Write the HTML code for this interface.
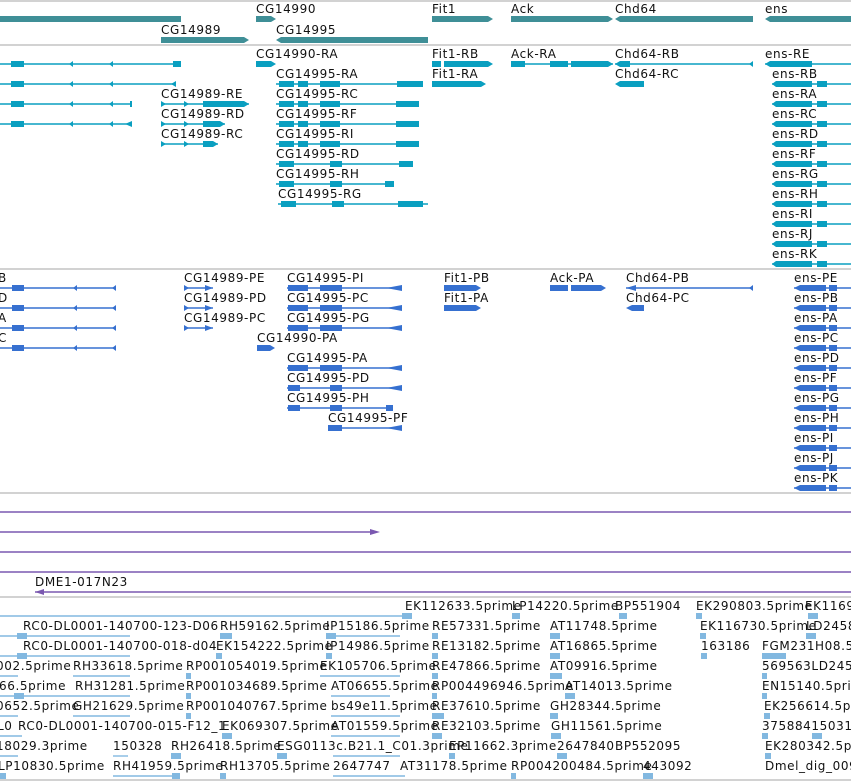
<!DOCTYPE html>
<html><head><meta charset="utf-8"><style>
html,body{margin:0;padding:0;background:#fff;width:851px;height:781px;overflow:hidden}
svg{display:block}
text{font-family:"DejaVu Sans","Liberation Sans",sans-serif;font-size:12px;letter-spacing:0.6px;fill:#111}
.g{fill:#3f8f97}.t{fill:#0a9fc0}.p{fill:#3670d0}.u{fill:#7a58b0}.e{fill:#82b8e0}
.tl{stroke:#0a9fc0;stroke-width:1.4}.pl{stroke:#3670d0;stroke-width:1.4}.ul{stroke:#7a58b0;stroke-width:1.4}.el{stroke:#82b8e0;stroke-width:1.4}
.bd{stroke:#c4c4c4;stroke-width:1.5}
</style></head><body>
<svg width="851" height="781" xmlns="http://www.w3.org/2000/svg">
<line class="bd" x1="0" y1="1" x2="851" y2="1"/>
<line class="bd" x1="0" y1="45" x2="851" y2="45"/>
<line class="bd" x1="0" y1="269" x2="851" y2="269"/>
<line class="bd" x1="0" y1="493" x2="851" y2="493"/>
<line class="bd" x1="0" y1="597" x2="851" y2="597"/>
<line class="bd" x1="0" y1="780" x2="851" y2="780"/>

<rect class="g" x="0" y="16" width="181" height="6"/>
<text x="256" y="13">CG14990</text>
<polygon class="g" points="256,16 271,16 276,19 271,22 256,22"/>
<text x="432" y="13">Fit1</text>
<polygon class="g" points="432,16 488,16 493,19 488,22 432,22"/>
<text x="511" y="13">Ack</text>
<polygon class="g" points="511,16 608,16 613,19 608,22 511,22"/>
<text x="615" y="13">Chd64</text>
<polygon class="g" points="620,16 753,16 753,22 620,22 615,19"/>
<text x="765" y="13">ens</text>
<polygon class="g" points="770,16 851,16 851,22 770,22 765,19"/>
<text x="161" y="34">CG14989</text>
<polygon class="g" points="161,37 244,37 249,40 244,43 161,43"/>
<text x="276" y="34">CG14995</text>
<polygon class="g" points="281,37 428,37 428,43 281,43 276,40"/>

<g>
<line class="tl" x1="0" y1="64" x2="181" y2="64"/><rect class="t" x="11" y="61" width="13" height="6"/><rect class="t" x="173" y="61" width="8" height="6"/><polygon class="t" points="73,61 73,67 69,64"/><polygon class="t" points="113,61 113,67 109,64"/>
<line class="tl" x1="0" y1="84" x2="176" y2="84"/><rect class="t" x="11" y="81" width="13" height="6"/><polygon class="t" points="176,81 176,87 171,84"/><polygon class="t" points="73,81 73,87 69,84"/><polygon class="t" points="113,81 113,87 109,84"/>
<line class="tl" x1="0" y1="104" x2="132" y2="104"/><rect class="t" x="11" y="101" width="13" height="6"/><polygon class="t" points="73,101 73,107 69,104"/><polygon class="t" points="113,101 113,107 109,104"/><rect class="t" x="130" y="101" width="2" height="6"/>
<line class="tl" x1="0" y1="124" x2="132" y2="124"/><rect class="t" x="11" y="121" width="13" height="6"/><polygon class="t" points="73,121 73,127 69,124"/><polygon class="t" points="113,121 113,127 109,124"/><polygon class="t" points="132,121 132,127 125,124"/>

<text x="256" y="58">CG14990-RA</text><polygon class="t" points="256,61 271,61 276,64 271,67 256,67"/>
<text x="432" y="58">Fit1-RB</text><rect class="t" x="432" y="61" width="9" height="6"/><polygon class="t" points="444,61 488,61 493,64 488,67 444,67"/>
<text x="511" y="58">Ack-RA</text><line class="tl" x1="511" y1="64" x2="613" y2="64"/><rect class="t" x="511" y="61" width="14" height="6"/><rect class="t" x="550" y="61" width="18" height="6"/><polygon class="t" points="571,61 608,61 613,64 608,67 571,67"/>
<text x="615" y="58">Chd64-RB</text><line class="tl" x1="615" y1="64" x2="753" y2="64"/><polygon class="t" points="620,61 630,61 630,67 620,67 615,64"/><polygon class="t" points="753,61 753,67 749,64"/>
<text x="765" y="58">ens-RE</text><line class="tl" x1="765" y1="64" x2="851" y2="64"/><polygon class="t" points="770,61 812,61 812,67 770,67 765,64"/>

<text x="276" y="78">CG14995-RA</text><line class="tl" x1="276" y1="84" x2="423" y2="84"/><rect class="t" x="279" y="81" width="15" height="6"/><rect class="t" x="298" y="81" width="10" height="6"/><rect class="t" x="320" y="81" width="20" height="6"/><rect class="t" x="397" y="81" width="26" height="6"/>
<text x="432" y="78">Fit1-RA</text><polygon class="t" points="432,81 481,81 486,84 481,87 432,87"/>
<text x="615" y="78">Chd64-RC</text><polygon class="t" points="620,81 644,81 644,87 620,87 615,84"/>

<text x="161" y="98">CG14989-RE</text><line class="tl" x1="161" y1="104" x2="249" y2="104"/><polygon class="t" points="161,101 166,104 161,107"/><polygon class="t" points="184,101 189,104 184,107"/><polygon class="t" points="203,101 244,101 249,104 244,107 203,107"/>
<text x="276" y="98">CG14995-RC</text><line class="tl" x1="276" y1="104" x2="419" y2="104"/><rect class="t" x="279" y="101" width="15" height="6"/><rect class="t" x="298" y="101" width="10" height="6"/><rect class="t" x="320" y="101" width="20" height="6"/><rect class="t" x="396" y="101" width="23" height="6"/>

<text x="161" y="118">CG14989-RD</text><line class="tl" x1="161" y1="124" x2="225" y2="124"/><polygon class="t" points="161,121 166,124 161,127"/><polygon class="t" points="184,121 189,124 184,127"/><polygon class="t" points="203,121 220,121 225,124 220,127 203,127"/>
<text x="276" y="118">CG14995-RF</text><line class="tl" x1="276" y1="124" x2="419" y2="124"/><rect class="t" x="279" y="121" width="15" height="6"/><rect class="t" x="298" y="121" width="10" height="6"/><rect class="t" x="320" y="121" width="20" height="6"/><rect class="t" x="396" y="121" width="23" height="6"/>

<text x="161" y="138">CG14989-RC</text><line class="tl" x1="161" y1="144" x2="218" y2="144"/><polygon class="t" points="161,141 166,144 161,147"/><polygon class="t" points="184,141 189,144 184,147"/><polygon class="t" points="203,141 213,141 218,144 213,147 203,147"/>
<text x="276" y="138">CG14995-RI</text><line class="tl" x1="276" y1="144" x2="419" y2="144"/><rect class="t" x="279" y="141" width="15" height="6"/><rect class="t" x="298" y="141" width="10" height="6"/><rect class="t" x="320" y="141" width="20" height="6"/><rect class="t" x="396" y="141" width="23" height="6"/>

<text x="276" y="158">CG14995-RD</text><line class="tl" x1="276" y1="164" x2="413" y2="164"/><rect class="t" x="279" y="161" width="15" height="6"/><rect class="t" x="330" y="161" width="12" height="6"/><rect class="t" x="399" y="161" width="14" height="6"/>
<text x="276" y="178">CG14995-RH</text><line class="tl" x1="276" y1="184" x2="394" y2="184"/><rect class="t" x="279" y="181" width="15" height="6"/><rect class="t" x="330" y="181" width="12" height="6"/><rect class="t" x="385" y="181" width="9" height="6"/>
<text x="278" y="198">CG14995-RG</text><line class="tl" x1="278" y1="204" x2="428" y2="204"/><rect class="t" x="281" y="201" width="15" height="6"/><rect class="t" x="332" y="201" width="12" height="6"/><rect class="t" x="398" y="201" width="25" height="6"/>

<g>
<text x="772" y="78">ens-RB</text>
<text x="772" y="98">ens-RA</text>
<text x="772" y="118">ens-RC</text>
<text x="772" y="138">ens-RD</text>
<text x="772" y="158">ens-RF</text>
<text x="772" y="178">ens-RG</text>
<text x="772" y="198">ens-RH</text>
<text x="772" y="218">ens-RI</text>
<text x="772" y="238">ens-RJ</text>
<text x="772" y="258">ens-RK</text>
</g>
<g>
<line class="tl" x1="772" y1="84" x2="851" y2="84"/><polygon class="t" points="776,81 812,81 812,87 776,87 772,84"/><rect class="t" x="817" y="81" width="10" height="6"/>
<line class="tl" x1="772" y1="104" x2="851" y2="104"/><polygon class="t" points="776,101 812,101 812,107 776,107 772,104"/><rect class="t" x="817" y="101" width="10" height="6"/>
<line class="tl" x1="772" y1="124" x2="851" y2="124"/><polygon class="t" points="776,121 812,121 812,127 776,127 772,124"/><rect class="t" x="817" y="121" width="10" height="6"/>
<line class="tl" x1="772" y1="144" x2="851" y2="144"/><polygon class="t" points="776,141 812,141 812,147 776,147 772,144"/><rect class="t" x="817" y="141" width="10" height="6"/>
<line class="tl" x1="772" y1="164" x2="851" y2="164"/><polygon class="t" points="776,161 812,161 812,167 776,167 772,164"/><rect class="t" x="817" y="161" width="10" height="6"/>
<line class="tl" x1="772" y1="184" x2="851" y2="184"/><polygon class="t" points="776,181 812,181 812,187 776,187 772,184"/><rect class="t" x="817" y="181" width="10" height="6"/>
<line class="tl" x1="772" y1="204" x2="851" y2="204"/><polygon class="t" points="776,201 812,201 812,207 776,207 772,204"/><rect class="t" x="817" y="201" width="10" height="6"/>
<line class="tl" x1="772" y1="224" x2="851" y2="224"/><polygon class="t" points="776,221 812,221 812,227 776,227 772,224"/><rect class="t" x="817" y="221" width="10" height="6"/>
<line class="tl" x1="772" y1="244" x2="851" y2="244"/><polygon class="t" points="776,241 812,241 812,247 776,247 772,244"/><rect class="t" x="817" y="241" width="10" height="6"/>
<line class="tl" x1="772" y1="264" x2="851" y2="264"/><polygon class="t" points="776,261 812,261 812,267 776,267 772,264"/><rect class="t" x="817" y="261" width="10" height="6"/>
</g>
</g>

<g>
<text x="-2" y="282">B</text><text x="-2" y="302">D</text><text x="-2" y="322">A</text><text x="-2" y="342">C</text>
<line class="pl" x1="0" y1="288" x2="116" y2="288"/><rect class="p" x="12" y="285" width="12" height="6"/><polygon class="p" points="116,285 116,291 112,288"/><polygon class="p" points="77,285 77,291 73,288"/>
<line class="pl" x1="0" y1="308" x2="116" y2="308"/><rect class="p" x="12" y="305" width="12" height="6"/><polygon class="p" points="116,305 116,311 112,308"/><polygon class="p" points="77,305 77,311 73,308"/>
<line class="pl" x1="0" y1="328" x2="116" y2="328"/><rect class="p" x="12" y="325" width="12" height="6"/><polygon class="p" points="116,325 116,331 112,328"/><polygon class="p" points="77,325 77,331 73,328"/>
<line class="pl" x1="0" y1="348" x2="116" y2="348"/><rect class="p" x="12" y="345" width="12" height="6"/><polygon class="p" points="116,345 116,351 112,348"/><polygon class="p" points="77,345 77,351 73,348"/>

<text x="184" y="282">CG14989-PE</text><line class="pl" x1="184" y1="288" x2="213" y2="288"/><polygon class="p" points="184,285 189,288 184,291"/><polygon class="p" points="205,285 213,288 205,291"/>
<text x="184" y="302">CG14989-PD</text><line class="pl" x1="184" y1="308" x2="213" y2="308"/><polygon class="p" points="184,305 189,308 184,311"/><polygon class="p" points="205,305 213,308 205,311"/>
<text x="184" y="322">CG14989-PC</text><line class="pl" x1="184" y1="328" x2="213" y2="328"/><polygon class="p" points="184,325 189,328 184,331"/><polygon class="p" points="205,325 213,328 205,331"/>
<text x="257" y="342">CG14990-PA</text><polygon class="p" points="257,345 270,345 275,348 270,351 257,351"/>

<text x="287" y="282">CG14995-PI</text><text x="287" y="302">CG14995-PC</text><text x="287" y="322">CG14995-PG</text>
<text x="287" y="362">CG14995-PA</text><text x="287" y="382">CG14995-PD</text><text x="287" y="402">CG14995-PH</text><text x="328" y="422">CG14995-PF</text>
<line class="pl" x1="287" y1="288" x2="402" y2="288"/><rect class="p" x="288" y="285" width="20" height="6"/><rect class="p" x="320" y="285" width="22" height="6"/><polygon class="p" points="402,285 402,291 386,288"/>
<line class="pl" x1="287" y1="308" x2="402" y2="308"/><rect class="p" x="288" y="305" width="20" height="6"/><rect class="p" x="320" y="305" width="22" height="6"/><polygon class="p" points="402,305 402,311 386,308"/>
<line class="pl" x1="287" y1="328" x2="402" y2="328"/><rect class="p" x="288" y="325" width="20" height="6"/><rect class="p" x="320" y="325" width="22" height="6"/><polygon class="p" points="402,325 402,331 386,328"/>
<line class="pl" x1="287" y1="368" x2="402" y2="368"/><rect class="p" x="288" y="365" width="20" height="6"/><rect class="p" x="320" y="365" width="22" height="6"/><polygon class="p" points="402,365 402,371 386,368"/>
<line class="pl" x1="287" y1="388" x2="402" y2="388"/><rect class="p" x="288" y="385" width="12" height="6"/><rect class="p" x="330" y="385" width="12" height="6"/><polygon class="p" points="402,385 402,391 386,388"/>
<line class="pl" x1="287" y1="408" x2="393" y2="408"/><rect class="p" x="288" y="405" width="12" height="6"/><rect class="p" x="330" y="405" width="12" height="6"/><rect class="p" x="386" y="405" width="7" height="6"/>
<line class="pl" x1="328" y1="428" x2="402" y2="428"/><rect class="p" x="328" y="425" width="14" height="6"/><polygon class="p" points="402,425 402,431 386,428"/>

<text x="444" y="282">Fit1-PB</text><polygon class="p" points="444,285 476,285 481,288 476,291 444,291"/>
<text x="444" y="302">Fit1-PA</text><polygon class="p" points="444,305 476,305 481,308 476,311 444,311"/>
<text x="550" y="282">Ack-PA</text><rect class="p" x="550" y="285" width="18" height="6"/><polygon class="p" points="571,285 601,285 606,288 601,291 571,291"/>
<text x="626" y="282">Chd64-PB</text><line class="pl" x1="626" y1="288" x2="753" y2="288"/><polygon class="p" points="626,288 636,285 636,291"/><polygon class="p" points="753,285 753,291 749,288"/>
<text x="626" y="302">Chd64-PC</text><polygon class="p" points="626,308 632,305 644,305 644,311 632,311"/>

<text x="794" y="282">ens-PE</text><text x="794" y="302">ens-PB</text><text x="794" y="322">ens-PA</text><text x="794" y="342">ens-PC</text><text x="794" y="362">ens-PD</text><text x="794" y="382">ens-PF</text><text x="794" y="402">ens-PG</text><text x="794" y="422">ens-PH</text><text x="794" y="442">ens-PI</text><text x="794" y="462">ens-PJ</text><text x="794" y="482">ens-PK</text>
<g>
<line class="pl" x1="794" y1="288" x2="851" y2="288"/><polygon class="p" points="794,288 800,285 826,285 826,291 800,291"/><rect class="p" x="829" y="285" width="8" height="6"/>
<line class="pl" x1="794" y1="308" x2="851" y2="308"/><polygon class="p" points="794,308 800,305 826,305 826,311 800,311"/><rect class="p" x="829" y="305" width="8" height="6"/>
<line class="pl" x1="794" y1="328" x2="851" y2="328"/><polygon class="p" points="794,328 800,325 826,325 826,331 800,331"/><rect class="p" x="829" y="325" width="8" height="6"/>
<line class="pl" x1="794" y1="348" x2="851" y2="348"/><polygon class="p" points="794,348 800,345 826,345 826,351 800,351"/><rect class="p" x="829" y="345" width="8" height="6"/>
<line class="pl" x1="794" y1="368" x2="851" y2="368"/><polygon class="p" points="794,368 800,365 826,365 826,371 800,371"/><rect class="p" x="829" y="365" width="8" height="6"/>
<line class="pl" x1="794" y1="388" x2="851" y2="388"/><polygon class="p" points="794,388 800,385 826,385 826,391 800,391"/><rect class="p" x="829" y="385" width="8" height="6"/>
<line class="pl" x1="794" y1="408" x2="851" y2="408"/><polygon class="p" points="794,408 800,405 826,405 826,411 800,411"/><rect class="p" x="829" y="405" width="8" height="6"/>
<line class="pl" x1="794" y1="428" x2="851" y2="428"/><polygon class="p" points="794,428 800,425 826,425 826,431 800,431"/><rect class="p" x="829" y="425" width="8" height="6"/>
<line class="pl" x1="794" y1="448" x2="851" y2="448"/><polygon class="p" points="794,448 800,445 826,445 826,451 800,451"/><rect class="p" x="829" y="445" width="8" height="6"/>
<line class="pl" x1="794" y1="468" x2="851" y2="468"/><polygon class="p" points="794,468 800,465 826,465 826,471 800,471"/><rect class="p" x="829" y="465" width="8" height="6"/>
<line class="pl" x1="794" y1="488" x2="851" y2="488"/><polygon class="p" points="794,488 800,485 826,485 826,491 800,491"/><rect class="p" x="829" y="485" width="8" height="6"/>
</g>
</g>

<line class="ul" x1="0" y1="512" x2="851" y2="512"/>
<line class="ul" x1="0" y1="532" x2="376" y2="532"/><polygon class="u" points="370,529 380,532 370,535"/>
<line class="ul" x1="0" y1="552" x2="851" y2="552"/>
<line class="ul" x1="0" y1="572" x2="851" y2="572"/>
<text x="35" y="586">DME1-017N23</text>
<line class="ul" x1="35" y1="592" x2="851" y2="592"/><polygon class="u" points="35,592 44,589 44,595"/>

<g class="e">
<line class="el" x1="0" y1="616" x2="410" y2="616"/><rect x="402" y="613" width="10" height="6"/>
<rect x="512" y="613" width="8" height="6"/><rect x="619" y="613" width="8" height="6"/><rect x="696" y="613" width="6" height="6"/><rect x="808" y="613" width="10" height="6"/>
<line class="el" x1="0" y1="636" x2="130" y2="636"/><rect x="17" y="633" width="10" height="6"/><rect x="220" y="633" width="12" height="6"/><rect x="326" y="633" width="10" height="6"/><line class="el" x1="336" y1="636" x2="400" y2="636"/><rect x="432" y="633" width="6" height="6"/><rect x="550" y="633" width="10" height="6"/><rect x="700" y="633" width="6" height="6"/><rect x="806" y="633" width="10" height="6"/>
<line class="el" x1="0" y1="656" x2="130" y2="656"/><rect x="17" y="653" width="10" height="6"/><rect x="216" y="653" width="6" height="6"/><rect x="326" y="653" width="6" height="6"/><rect x="432" y="653" width="6" height="6"/><rect x="550" y="653" width="10" height="6"/><rect x="701" y="653" width="6" height="6"/><rect x="762" y="653" width="24" height="6"/>
<line class="el" x1="0" y1="676" x2="18" y2="676"/><line class="el" x1="73" y1="676" x2="130" y2="676"/><rect x="186" y="673" width="5" height="6"/><line class="el" x1="320" y1="676" x2="400" y2="676"/><rect x="432" y="673" width="6" height="6"/><rect x="550" y="673" width="12" height="6"/><rect x="762" y="673" width="5" height="6"/>
<line class="el" x1="0" y1="696" x2="130" y2="696"/><rect x="14" y="693" width="10" height="6"/><rect x="186" y="693" width="5" height="6"/><line class="el" x1="331" y1="696" x2="390" y2="696"/><rect x="432" y="693" width="5" height="6"/><rect x="565" y="693" width="10" height="6"/><rect x="762" y="693" width="5" height="6"/>
<line class="el" x1="0" y1="716" x2="18" y2="716"/><line class="el" x1="73" y1="716" x2="130" y2="716"/><rect x="186" y="713" width="5" height="6"/><line class="el" x1="331" y1="716" x2="400" y2="716"/><rect x="432" y="713" width="12" height="6"/><rect x="550" y="713" width="8" height="6"/><rect x="764" y="713" width="6" height="6"/>
<line class="el" x1="0" y1="736" x2="22" y2="736"/><rect x="222" y="733" width="10" height="6"/><line class="el" x1="331" y1="736" x2="400" y2="736"/><rect x="432" y="733" width="10" height="6"/><rect x="551" y="733" width="10" height="6"/><rect x="762" y="733" width="6" height="6"/><rect x="812" y="733" width="10" height="6"/>
<line class="el" x1="0" y1="756" x2="18" y2="756"/><line class="el" x1="113" y1="756" x2="128" y2="756"/><rect x="171" y="753" width="10" height="6"/><rect x="277" y="753" width="10" height="6"/><line class="el" x1="333" y1="756" x2="400" y2="756"/><rect x="449" y="753" width="6" height="6"/><rect x="557" y="753" width="10" height="6"/><rect x="765" y="753" width="6" height="6"/>
<rect x="0" y="773" width="6" height="6"/><line class="el" x1="113" y1="776" x2="180" y2="776"/><rect x="172" y="773" width="8" height="6"/><rect x="220" y="773" width="6" height="6"/><line class="el" x1="333" y1="776" x2="405" y2="776"/><rect x="511" y="773" width="5" height="6"/><rect x="643" y="773" width="10" height="6"/>
</g>
<g>
<text x="405" y="610">EK112633.5prime</text><text x="512" y="610">LP14220.5prime</text><text x="615" y="610">BP551904</text><text x="696" y="610">EK290803.5prime</text><text x="805" y="610">EK1169</text>
<text x="23" y="630">RC0-DL0001-140700-123-D06</text><text x="220" y="630">RH59162.5prime</text><text x="326" y="630">IP15186.5prime</text><text x="432" y="630">RE57331.5prime</text><text x="550" y="630">AT11748.5prime</text><text x="700" y="630">EK116730.5prime</text><text x="806" y="630">LD2458</text>
<text x="23" y="650">RC0-DL0001-140700-018-d04</text><text x="216" y="650">EK154222.5prime</text><text x="326" y="650">IP14986.5prime</text><text x="432" y="650">RE13182.5prime</text><text x="550" y="650">AT16865.5prime</text><text x="701" y="650">163186</text><text x="762" y="650">FGM231H08.5prime</text>
<text x="-4" y="670">002.5prime</text><text x="73" y="670">RH33618.5prime</text><text x="186" y="670">RP001054019.5prime</text><text x="320" y="670">EK105706.5prime</text><text x="432" y="670">RE47866.5prime</text><text x="550" y="670">AT09916.5prime</text><text x="762" y="670">569563LD2458</text>
<text x="-1" y="690">66.5prime</text><text x="75" y="690">RH31281.5prime</text><text x="186" y="690">RP001034689.5prime</text><text x="331" y="690">AT06655.5prime</text><text x="432" y="690">RP004496946.5prime</text><text x="565" y="690">AT14013.5prime</text><text x="762" y="690">EN15140.5prime</text>
<text x="-4" y="710">0652.5prime</text><text x="73" y="710">GH21629.5prime</text><text x="186" y="710">RP001040767.5prime</text><text x="331" y="710">bs49e11.5prime</text><text x="432" y="710">RE37610.5prime</text><text x="550" y="710">GH28344.5prime</text><text x="764" y="710">EK256614.5prime</text>
<text x="-3" y="730">L0</text><text x="18" y="730">RC0-DL0001-140700-015-F12_1</text><text x="222" y="730">EK069307.5prime</text><text x="331" y="730">AT01559.5prime</text><text x="432" y="730">RE32103.5prime</text><text x="551" y="730">GH11561.5prime</text><text x="762" y="730">37588415031</text>
<text x="-4" y="750">18029.3prime</text><text x="113" y="750">150328</text><text x="171" y="750">RH26418.5prime</text><text x="277" y="750">ESG0113c.B21.1_C01.3prime</text><text x="449" y="750">EP11662.3prime</text><text x="557" y="750">2647840</text><text x="615" y="750">BP552095</text><text x="765" y="750">EK280342.5prime</text>
<text x="-2" y="770">LP10830.5prime</text><text x="113" y="770">RH41959.5prime</text><text x="220" y="770">RH13705.5prime</text><text x="333" y="770">2647747</text><text x="400" y="770">AT31178.5prime</text><text x="511" y="770">RP004200484.5prime</text><text x="643" y="770">443092</text><text x="765" y="770">Dmel_dig_0098</text>
</g>
</svg>
</body></html>
